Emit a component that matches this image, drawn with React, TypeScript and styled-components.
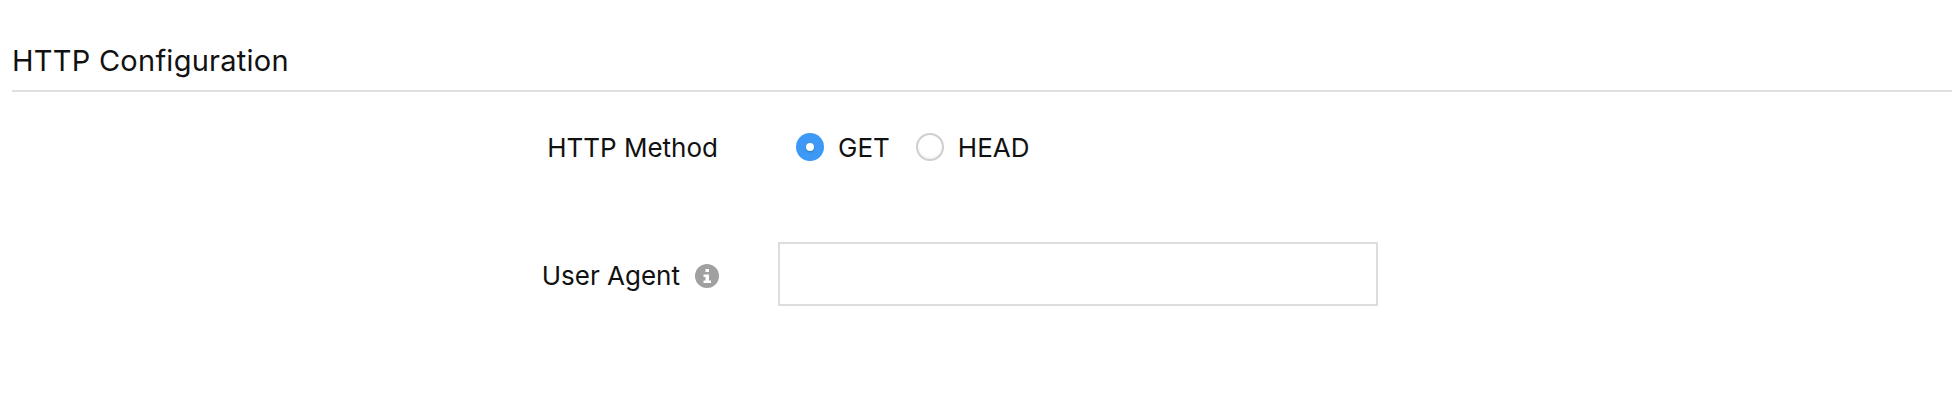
import React from 'react';
import styled, { createGlobalStyle } from 'styled-components';

const GlobalStyle = createGlobalStyle`
  html, body {
    margin: 0;
    padding: 0;
    background: #fff;
  }
`;

const Page = styled.div`
  font-family: Inter, Lato, sans-serif;
  color: #111;
  height: 400px;
  background: #fff;
  padding: 40px 0 0 12px;
  box-sizing: border-box;
`;

const SectionTitle = styled.h2`
  margin: 0;
  height: 50px;
  line-height: 41px;
  font-size: 29px;
  font-weight: 400;
  letter-spacing: 0.25px;
  border-bottom: 2px solid #e0e0e0;
`;

const Form = styled.div`
  display: flex;
  flex-direction: column;
`;

const Row = styled.div<{ $height: number; $top: number }>`
  display: grid;
  grid-template-columns: 708px 1fr;
  column-gap: 58px;
  align-items: center;
  height: ${p => p.$height}px;
  margin-top: ${p => p.$top}px;
`;

const Label = styled.label<{ $inset: number; $drop: number }>`
  display: flex;
  align-items: center;
  justify-content: flex-end;
  gap: 15px;
  font-size: 26px;
  padding-right: ${p => p.$inset}px;
  padding-top: ${p => p.$drop}px;
`;

const RadioGroup = styled.div`
  display: flex;
  align-items: center;
  padding-left: 18px;
`;

const RadioOption = styled.label`
  display: flex;
  align-items: center;
  gap: 14px;
  font-size: 26px;
  margin-right: 26px;
`;

const RadioMark = styled.span<{ $checked?: boolean }>`
  width: 28px;
  height: 28px;
  border-radius: 50%;
  box-sizing: border-box;
  display: flex;
  align-items: center;
  justify-content: center;
  background: ${p => (p.$checked ? '#3d99f5' : '#fff')};
  border: ${p => (p.$checked ? 'none' : '2px solid #cfcfcf')};
  box-shadow: ${p => (p.$checked ? 'none' : 'inset 0 -1px 2px rgba(0, 0, 0, 0.08)')};

  &::after {
    content: '';
    display: ${p => (p.$checked ? 'block' : 'none')};
    width: 8px;
    height: 8px;
    border-radius: 50%;
    background: #fff;
    box-shadow: 0 1px 2px rgba(0, 0, 0, 0.25);
  }
`;

const TextInput = styled.input`
  width: 600px;
  height: 64px;
  box-sizing: border-box;
  border: 2px solid #ddd;
  background: #fff;
  outline: none;
  padding: 0 12px;
`;

const InfoIcon = () => (
  <svg width="24" height="24" viewBox="0 0 24 24">
    <circle cx="12" cy="12" r="12" fill="#a0a0a0" />
    <rect x="10.5" y="5" width="3.5" height="3" fill="#fff" />
    <path d="M8.5 10.5h5.5v6h2v2.5H8.5v-2.5h2v-3.5h-2z" fill="#fff" />
  </svg>
);

const App: React.FC = () => (
  <Page>
    <GlobalStyle />
    <SectionTitle>HTTP Configuration</SectionTitle>
    <Form>
      <Row $height={50} $top={30}>
        <Label $inset={2} $drop={0}>HTTP Method</Label>
        <RadioGroup>
          <RadioOption>
            <RadioMark $checked />
            GET
          </RadioOption>
          <RadioOption>
            <RadioMark />
            HEAD
          </RadioOption>
        </RadioGroup>
      </Row>
      <Row $height={64} $top={70}>
        <Label $inset={1} $drop={3}>
          User Agent
          <InfoIcon />
        </Label>
        <TextInput type="text" />
      </Row>
    </Form>
  </Page>
);

export default App;
